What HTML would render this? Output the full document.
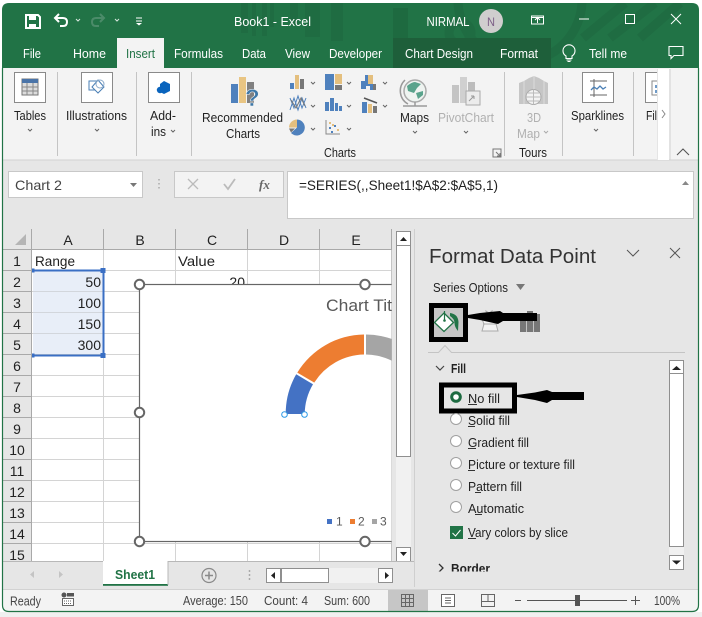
<!DOCTYPE html>
<html><head><meta charset="utf-8"><style>
html,body{margin:0;padding:0;background:#fff;width:702px;height:617px;overflow:hidden}
svg{display:block;font-family:"Liberation Sans",sans-serif}
text{fill:#222;font-size:13px}
.w text,text.w{fill:#fff}
.h text{font-size:14px;text-anchor:middle;fill:#222}
.d text{fill:#b0b0b0}
.g{stroke:#d4d4d4;stroke-width:1}
.hd{fill:#fff;stroke:#666;stroke-width:2}
.btn{fill:#fff;stroke:#8f8f8f;stroke-width:1}
.u{stroke:#333;stroke-width:1}
</style></head><body>
<svg width="702" height="617" viewBox="0 0 702 617" xmlns="http://www.w3.org/2000/svg">
<defs>
<clipPath id="win"><path d="M9 3H692Q699 3 699 10V605Q699 612 692 612H9Q2 612 2 605V10Q2 3 9 3Z"/></clipPath>
<clipPath id="cc"><rect x="0" y="250" width="392" height="311"/></clipPath>
<clipPath id="bd"><rect x="430" y="555" width="230" height="16.500"/></clipPath>
<clipPath id="c20"><rect x="175" y="271" width="75" height="13"/></clipPath>
</defs>
<rect width="702" height="617" fill="#fff"/>
<rect x="0" y="612" width="702" height="5" fill="#f0f0f0"/>
<g clip-path="url(#win)">
<rect x="2" y="3" width="697" height="609" fill="#217346"/>
<!-- title pattern -->
<g fill="#1f6c42">
<path d="M241 3h7v30h-7zM252 3h4v33h-4zM262 3h5v33h-5zM270 3h4v24h-4zM290 3h8v22h-8zM305 3h15v34h-15zM331 3h12v38h-12z"/>
</g>
<g fill="none" stroke="#1f6c42" stroke-width="9">
<circle cx="520" cy="0" r="62"/><circle cx="460" cy="33" r="11"/>
<path d="M625 3L583 38M655 3L610 38M680 3L640 38"/>
</g>
<rect x="393" y="38" width="158" height="30" fill="#1e5f3a"/>
<path d="M393 8h15v30h-15z" fill="#1e6a40"/>
<!-- ribbon -->
<rect x="2" y="68" width="697" height="92" fill="#f3f3f3"/>
<rect x="2" y="160" width="697" height="72" fill="#e6e6e6"/>
<rect x="2" y="159.500" width="697" height="1" fill="#d2d2d2"/>
<rect x="117" y="38" width="47" height="31" fill="#f3f3f3"/>
<!-- QAT -->
<path d="M26 15h12l2 2v11H26z" fill="none" stroke="#fff" stroke-width="2"/><rect x="29" y="15" width="7" height="5" fill="#fff"/><rect x="29" y="24" width="7" height="4" fill="#fff"/>
<path d="M59 14l-4 4 4 4M55 18h8q4 0 4 4t-4 4h-3" fill="none" stroke="#fff" stroke-width="2"/>
<path d="M76 19l2 2 2-2M115 19l2 2 2-2" fill="none" stroke="#d8e6de" stroke-width="1"/>
<path d="M100 14l4 4-4 4M104 18h-8q-4 0-4 4t4 4h3" fill="none" stroke="#4b8b69" stroke-width="2"/>
<path d="M136 18h6M136 21h6" stroke="#fff" stroke-width="1"/><path d="M136 23l3 2.500 3-2.500z" fill="#fff"/>
<!-- title -->
<g class="w">
<text x="234" y="26" textLength="77" lengthAdjust="spacingAndGlyphs">Book1  -  Excel</text>
<text x="426.500" y="26" textLength="43" lengthAdjust="spacingAndGlyphs">NIRMAL</text>
<text x="23" y="58" textLength="18" lengthAdjust="spacingAndGlyphs">File</text>
<text x="73" y="58" textLength="33" lengthAdjust="spacingAndGlyphs">Home</text>
<text x="174" y="58" textLength="49" lengthAdjust="spacingAndGlyphs">Formulas</text>
<text x="242" y="58" textLength="24" lengthAdjust="spacingAndGlyphs">Data</text>
<text x="285" y="58" textLength="25" lengthAdjust="spacingAndGlyphs">View</text>
<text x="329" y="58" textLength="53" lengthAdjust="spacingAndGlyphs">Developer</text>
<text x="405" y="58" textLength="68" lengthAdjust="spacingAndGlyphs">Chart Design</text>
<text x="500" y="58" textLength="38" lengthAdjust="spacingAndGlyphs">Format</text>
<text x="589" y="58" textLength="38" lengthAdjust="spacingAndGlyphs">Tell me</text>
</g>
<text x="126" y="58" textLength="29" lengthAdjust="spacingAndGlyphs" style="fill:#217346">Insert</text>
<circle cx="491" cy="21" r="12" fill="#d0cece"/>
<text x="487" y="26" textLength="8" lengthAdjust="spacingAndGlyphs" style="fill:#7d5f87;font-size:12px">N</text>
<!-- window ctrl -->
<path d="M531.500 16h12v8h-12zM537.500 23v-5M535 20l2.500-2.500 2.500 2.500M531.500 17.500h12" fill="none" stroke="#fff" stroke-width="1"/>
<path d="M579 19h10" stroke="#fff" stroke-width="1"/>
<rect x="625.500" y="14.500" width="9" height="9" fill="none" stroke="#fff" stroke-width="1"/>
<path d="M671 14l10 10M681 14l-10 10" stroke="#fff" stroke-width="1"/>
<path d="M566 56a6 6 0 1 1 6 0v2.500h-6zM566.500 60h5M567.500 61.500h3" fill="none" stroke="#fff" stroke-width="1.100"/>
<path d="M669 46.500h14v9h-9l-3 3v-3h-2z" fill="none" stroke="#fff" stroke-width="1.100"/>
<!-- ribbon groups sep -->
<g stroke="#c4c4c4" stroke-width="1">
<path d="M57.500 72v84M136.500 72v84M191.500 72v84M504.500 72v84M562.500 72v84M633.500 72v84"/>
</g>
<!-- large buttons -->
<g fill="#fff" stroke="#8a8a8a" stroke-width="1">
<rect x="14.500" y="72.500" width="31" height="30"/>
<rect x="81.500" y="72.500" width="31" height="30"/>
<rect x="148.500" y="72.500" width="31" height="30"/>
<rect x="582.500" y="72.500" width="31" height="30"/>
<rect x="645.500" y="72.500" width="20" height="30"/>
</g>
<rect x="22" y="79" width="16" height="16" fill="#dcdcdc" stroke="#777"/><rect x="22" y="79" width="16" height="4" fill="#4a74a8"/><path d="M22 87h16M22 91h16M27 83v12M33 83v12" stroke="#888"/>
<path d="M89 81h9v9h-9z" fill="none" stroke="#4a7fb5"/><path d="M98 80l6 7-6 6-6-6z" fill="#fff" stroke="#4a7fb5"/><circle cx="100" cy="84" r="4" fill="none" stroke="#8aa9c9"/>
<path d="M164 81l6 3v7l-6 3-4-2v-8z" fill="#0a64bd"/><circle cx="160" cy="90" r="3.200" fill="#0a64bd"/>
<path d="M590 81h17M590 95h17M594 79v18" stroke="#666" fill="none"/><path d="M591 90l3-3 3 2 3-3 3 3 3-2" fill="none" stroke="#4a7fb5" stroke-width="1.300"/>
<rect x="652" y="81" width="8" height="14" fill="none" stroke="#8a8a8a"/><rect x="655" y="85" width="5" height="3" fill="#6f9bc8"/><rect x="655" y="90" width="5" height="3" fill="#6f9bc8"/>
<!-- fil scroll -->
<rect x="657" y="69" width="12" height="91" fill="#fff"/><rect x="657" y="69" width="1" height="91" fill="#e5e5e5"/><rect x="669.500" y="69" width="1" height="91" fill="#d0d0d0"/>
<path d="M662 110l3 4-3 4" fill="none" stroke="#888"/>
<path d="M677 155l6-6 6 6" fill="none" stroke="#555" stroke-width="1.100"/>
<!-- ribbon labels -->
<text x="14" y="120" textLength="32" lengthAdjust="spacingAndGlyphs">Tables</text>
<text x="66" y="120" textLength="61" lengthAdjust="spacingAndGlyphs">Illustrations</text>
<text x="150" y="120" textLength="26" lengthAdjust="spacingAndGlyphs">Add-</text>
<text x="151" y="136" textLength="15" lengthAdjust="spacingAndGlyphs">ins</text>
<text x="202" y="122" textLength="81" lengthAdjust="spacingAndGlyphs">Recommended</text>
<text x="226" y="138" textLength="34" lengthAdjust="spacingAndGlyphs">Charts</text>
<text x="324" y="157" textLength="32" lengthAdjust="spacingAndGlyphs">Charts</text>
<text x="400" y="122" textLength="29" lengthAdjust="spacingAndGlyphs">Maps</text>
<text x="519" y="157" textLength="28" lengthAdjust="spacingAndGlyphs">Tours</text>
<text x="571" y="120" textLength="53" lengthAdjust="spacingAndGlyphs">Sparklines</text>
<text x="646" y="120" textLength="11" lengthAdjust="spacingAndGlyphs">Fil</text>
<g class="d">
<text x="438" y="122" textLength="56" lengthAdjust="spacingAndGlyphs">PivotChart</text>
<text x="527" y="122" textLength="14" lengthAdjust="spacingAndGlyphs">3D</text>
<text x="517" y="138" textLength="23" lengthAdjust="spacingAndGlyphs">Map</text>
</g>
<path d="M28 129l2 2 2-2M95 129l2 2 2-2M171 130l2 2 2-2M413 131l2 2 2-2M594 129l2 2 2-2M464 131l2 2 2-2" fill="none" stroke="#666"/>
<path d="M544 131l2 2 2-2" fill="none" stroke="#aaa"/>
<!-- rec charts icon -->
<rect x="231" y="84" width="7" height="19" fill="#4f81bd"/><rect x="239" y="77" width="7" height="26" fill="#e9c583"/><rect x="247" y="82" width="7" height="21" fill="#808080"/>
<text x="245" y="106" style="font-size:24px;font-weight:bold;fill:#3e78a8;stroke:#f3f3f3;stroke-width:.5">?</text>
<!-- chart icons -->
<g>
<rect x="290" y="83" width="4" height="6" fill="#4f81bd"/><rect x="295" y="75" width="4" height="14" fill="#e4bf7e"/><rect x="300" y="79" width="4" height="10" fill="#777"/>
<rect x="325" y="74" width="9" height="16" fill="#4f81bd"/><rect x="335" y="74" width="7" height="10" fill="#e4bf7e"/><rect x="335" y="85" width="7" height="5" fill="#777"/>
<path d="M361 89v-8h4v-6h4v9h4v6h-3v-4h-4v3z" fill="#4f81bd"/><rect x="368" y="75" width="5" height="9" fill="#e4bf7e"/><rect x="373" y="84" width="3" height="6" fill="#777"/>
<path d="M290 98l4 10 4-12 4 12 4-10M290 110l4-12 4 12 4-12 4 10" fill="none" stroke="#4f81bd"/><path d="M291 100l5 8 5-10 4 8" fill="none" stroke="#777"/>
<rect x="325" y="102" width="4" height="9" fill="#4f81bd"/><rect x="330" y="98" width="4" height="13" fill="#4f81bd"/><rect x="335" y="103" width="3" height="8" fill="#4f81bd"/><rect x="339" y="106" width="3" height="5" fill="#4f81bd"/>
<rect x="362" y="102" width="5" height="11" fill="#4f81bd"/><rect x="368" y="104" width="4" height="9" fill="#e4bf7e"/><rect x="373" y="106" width="4" height="7" fill="#777"/><path d="M364 98l13 5" stroke="#555" stroke-width="1.500"/>
<path d="M297 119.500a8 8 0 1 1-6 13.500l6-5.500z" fill="#4f81bd"/><path d="M297 119.500a8 8 0 0 0-8 8h8z" fill="#e4bf7e"/><path d="M289 128.500h6l-4 4z" fill="#777"/>
<path d="M326 120v14h14" fill="none" stroke="#888"/><g fill="#4f81bd"><rect x="329" y="127" width="2" height="2"/><rect x="334" y="125" width="2" height="2"/><rect x="331" y="131" width="2" height="2"/></g><g fill="#e4bf7e"><rect x="332" y="124" width="2" height="2"/><rect x="337" y="129" width="2" height="2"/><rect x="329" y="122" width="2" height="2"/></g>
<path d="M311 82l2 2 2-2M347 82l2 2 2-2M383 82l2 2 2-2M311 105l2 2 2-2M347 105l2 2 2-2M383 105l2 2 2-2M311 128l2 2 2-2M347 128l2 2 2-2" fill="none" stroke="#666"/>
</g>
<!-- globe -->
<circle cx="415" cy="91" r="11" fill="#eef3f0" stroke="#aaa" stroke-width="1.500"/><path d="M407 86q5-4 8-4l6 2-4 4-3 5-6-2zM416 93l7-2 0 4-5 4z" fill="#5aa38c"/><path d="M405 80a15 15 0 0 0 3 24M403 106h24M415 102v4" fill="none" stroke="#999" stroke-width="1.500"/>
<!-- pivot -->
<rect x="452" y="85" width="7" height="18" fill="#c4c4c4"/><rect x="460" y="77" width="7" height="26" fill="#d0d0d0"/><rect x="468" y="82" width="7" height="21" fill="#bcbcbc"/><rect x="466" y="91" width="14" height="14" fill="#ececec" stroke="#aaa"/><path d="M469 101l5-5M474 96h-3M474 96v3" stroke="#999" fill="none"/>
<!-- 3d map -->
<path d="M519 83l5-2v23h-5zM524 81l5-3v26h-5zM529 78l5-2v28h-5zM534 76l5 2v26h-5zM539 78l5 3v23h-5zM544 81l4 2v21h-4z" fill="#c6c6c6"/><path d="M524 81v23M534 76v28M544 81v23" stroke="#dcdcdc"/><circle cx="533.500" cy="97" r="7.500" fill="#f3f3f3" stroke="#aaa"/><path d="M526 97h15M533.500 89.500v15M528 93h11M528 101h11" stroke="#bbb"/>
<!-- dialog launcher -->
<path d="M493 149h8v8h-8z M496 152l4 4M500 153v3h-3" fill="none" stroke="#777"/>
<!-- name box -->
<rect x="8.500" y="171.500" width="134" height="26" fill="#fff" stroke="#c8c8c8"/>
<text x="15" y="190" textLength="47" lengthAdjust="spacingAndGlyphs" style="fill:#444;font-size:14px">Chart 2</text>
<path d="M130 183h7l-3.500 4z" fill="#777"/>
<path d="M159 179v1.500M159 183v1.500M159 187v1.500" stroke="#aaa" stroke-width="1.500"/>
<rect x="174.500" y="171.500" width="109" height="26" fill="#f3f3f3" stroke="#c8c8c8"/>
<path d="M188 179l10 10M198 179l-10 10" stroke="#bbb" stroke-width="1.300"/>
<path d="M224 184l4 5 7-10" fill="none" stroke="#bbb" stroke-width="1.800"/>
<text x="259" y="189" style="font-family:'Liberation Serif',serif;font-style:italic;font-weight:bold;font-size:13px;fill:#666">fx</text>
<rect x="287.500" y="171.500" width="406" height="47" fill="#fff" stroke="#c8c8c8"/>
<text x="299" y="190" textLength="199" lengthAdjust="spacingAndGlyphs" style="font-size:14px">=SERIES(,,Sheet1!$A$2:$A$5,1)</text>
<path d="M682 185l3.500-4 3.500 4z" fill="#888"/>
<!-- grid -->
<rect x="3" y="229" width="389" height="332" fill="#fff"/>
<rect x="3" y="229" width="389" height="20.500" fill="#e6e6e6"/>
<rect x="3" y="229" width="28.500" height="332" fill="#e6e6e6"/>
<path d="M15 245l11-11v11z" fill="#b5b5b5"/>
<g class="g">
<path d="M32 270.500H392M32 291.500H392M32 312.500H392M32 333.500H392M32 354.500H392M32 375.500H392M32 396.500H392M32 417.500H392M32 438.500H392M32 459.500H392M32 480.500H392M32 501.500H392M32 522.500H392M32 543.500H392"/>
<path d="M103.500 250V561M175.500 250V561M247.500 250V561M319.500 250V561M391.500 250V561"/>
</g>
<g stroke="#a9a9a9" stroke-width="1">
<path d="M3 249.500H392M31.500 229V561"/>
<path d="M103.500 229v20M175.500 229v20M247.500 229v20M319.500 229v20M391.500 229v20"/>
<path d="M3 270.500h28M3 291.500h28M3 312.500h28M3 333.500h28M3 354.500h28M3 375.500h28M3 396.500h28M3 417.500h28M3 438.500h28M3 459.500h28M3 480.500h28M3 501.500h28M3 522.500h28M3 543.500h28"/>
</g>
<g class="h">
<text x="68" y="245">A</text><text x="140" y="245">B</text><text x="212" y="245">C</text><text x="284" y="245">D</text><text x="356" y="245">E</text>
<text x="17" y="266">1</text><text x="17" y="287">2</text><text x="17" y="308">3</text><text x="17" y="329">4</text><text x="17" y="350">5</text><text x="17" y="371">6</text><text x="17" y="392">7</text><text x="17" y="413">8</text><text x="17" y="434">9</text><text x="17" y="455">10</text><text x="17" y="476">11</text><text x="17" y="497">12</text><text x="17" y="518">13</text><text x="17" y="539">14</text><text x="17" y="560">15</text>
</g>
<!-- cells -->
<rect x="33" y="271" width="70" height="83" fill="#e8eef8"/>
<path d="M33 291.500h70M33 312.500h70M33 333.500h70" stroke="#d2d6dc"/>
<path d="M33 270.500H103.500V355.500H33" fill="none" stroke="#3a6fc4" stroke-width="2"/>
<rect x="32" y="268.500" width="2.500" height="4" fill="#3a6fc4"/><rect x="100.500" y="268" width="5" height="5" fill="#3a6fc4"/><rect x="32" y="353.500" width="2.500" height="4" fill="#3a6fc4"/><rect x="100.500" y="353" width="5" height="5" fill="#3a6fc4"/>
<g>
<text x="35" y="266" style="font-size:14px" textLength="40" lengthAdjust="spacingAndGlyphs">Range</text>
<text x="178" y="266" style="font-size:14px" textLength="37" lengthAdjust="spacingAndGlyphs">Value</text>
<text x="101" y="287" text-anchor="end" style="font-size:14px">50</text>
<text x="101" y="308" text-anchor="end" style="font-size:14px">100</text>
<text x="101" y="329" text-anchor="end" style="font-size:14px">150</text>
<text x="101" y="350" text-anchor="end" style="font-size:14px">300</text>
<text x="245" y="287" text-anchor="end" style="font-size:14px" clip-path="url(#c20)">20</text>
</g>
<!-- chart -->
<g clip-path="url(#cc)">
<rect x="139.500" y="284.500" width="400" height="257" fill="#fff" stroke="#666" stroke-width="1.200"/>
<path d="M285.700 414A79.500 79.500 0 0 1 296.200 374.300L313 384.300A60 60 0 0 0 304.700 414Z" fill="#4472c4"/>
<path d="M297.300 372.600A79.500 79.500 0 0 1 364 334.500V354.500A60 60 0 0 0 314.300 382.600Z" fill="#ed7d31"/>
<path d="M366 334.500A79.500 79.500 0 0 1 445 414H425A60 60 0 0 0 366 354.500Z" fill="#a5a5a5"/>
</g>
<rect x="391.500" y="250" width="1" height="311" fill="#b5b5b5"/>
<text x="326" y="311" textLength="66" lengthAdjust="spacingAndGlyphs" style="font-size:17px;fill:#595959">Chart Tit</text>
<rect x="327" y="519" width="5" height="5" fill="#4472c4"/><text x="336" y="525.500" style="font-size:12px;fill:#595959">1</text>
<rect x="350" y="519" width="5" height="5" fill="#ed7d31"/><text x="358" y="525.500" style="font-size:12px;fill:#595959">2</text>
<rect x="372" y="519" width="5" height="5" fill="#a5a5a5"/><text x="380" y="525.500" style="font-size:12px;fill:#595959">3</text>
<circle cx="284.500" cy="414.500" r="2.800" fill="#fff" stroke="#2e9ae6" stroke-width="1"/>
<circle cx="304.500" cy="414.500" r="2.800" fill="#fff" stroke="#2e9ae6" stroke-width="1"/>
<g class="hd"><circle cx="139.500" cy="284.500" r="4.700"/><circle cx="365" cy="284.500" r="4.700"/><circle cx="139.500" cy="412.500" r="4.700"/><circle cx="139.500" cy="541.500" r="4.700"/><circle cx="365" cy="541.500" r="4.700"/></g>
<!-- vscroll -->
<rect x="392" y="229" width="22" height="332" fill="#e6e6e6"/>
<rect x="396" y="231" width="15" height="330" fill="#f1f1f1"/>
<rect x="396.500" y="245.500" width="14" height="211" fill="#fff" stroke="#8f8f8f"/>
<rect class="btn" x="396.500" y="231.500" width="14" height="14"/><path d="M400 241l3.500-4 3.500 4z" fill="#222"/>
<rect class="btn" x="396.500" y="547.500" width="14" height="14"/><path d="M400 552l3.500 4 3.500-4z" fill="#222"/>
<!-- pane -->
<rect x="414" y="229" width="285" height="361" fill="#e6e6e6"/>
<rect x="414" y="229" width="1" height="358" fill="#cfcfcf"/>
<text x="429" y="263" textLength="167" lengthAdjust="spacingAndGlyphs" style="font-size:20px;fill:#333">Format Data Point</text>
<path d="M627 250l6 6 6-6M670 248l10 10M680 248l-10 10" fill="none" stroke="#555" stroke-width="1"/>
<text x="433" y="292" textLength="75" lengthAdjust="spacingAndGlyphs" style="font-size:12.500px">Series Options</text>
<path d="M516 284h9l-4.500 6z" fill="#777"/>
<!-- pane tabs -->
<path d="M486 311l3 2 3-2-1 4h-4zM482 319h16l-2 5 2 7h-16l2-7zM483 324h14" fill="#f3f3f3" stroke="#aaa"/>
<rect x="520" y="314" width="6.300" height="18" fill="#777"/><rect x="527" y="311" width="6" height="21" fill="#777"/><rect x="533.700" y="314" width="6.300" height="18" fill="#777"/>
<rect x="431.500" y="305.500" width="34" height="34" fill="#c6c6c6" stroke="#000" stroke-width="5"/>
<path d="M450 313q8 1 8.500 9l-.5 9q-3.500-4-3.500-8 0-4-4.500-7z" fill="#217346"/>
<path d="M444 313l9.500 9.500-9.500 9-9.500-9z" fill="#fff" stroke="#217346" stroke-width="1.300"/>
<path d="M444.500 311v9" stroke="#217346" stroke-width="1.200"/><circle cx="444.500" cy="320.500" r="1.300" fill="#217346"/>
<path d="M468 315L480 313L500 311L503 313H537V321H503L498 324L480 320L468 318Z" fill="#000"/>
<path d="M428 352.500h10.500l6.500-7 6.500 7H685" fill="none" stroke="#c4c4c4"/>
<path d="M436 366l4 4 4-4" fill="none" stroke="#444" stroke-width="1.200"/>
<text x="451" y="373" textLength="15" lengthAdjust="spacingAndGlyphs" style="font-weight:bold;font-size:12.500px">Fill</text>
<!-- pane scroll -->
<rect x="669" y="360" width="15" height="210" fill="#f1f1f1"/>
<rect x="669.500" y="373.500" width="14" height="173" fill="#fff" stroke="#8f8f8f"/>
<rect class="btn" x="669.500" y="360.500" width="14" height="13"/><path d="M672 370l4.500-4 4.500 4z" fill="#222"/>
<rect class="btn" x="669.500" y="555.500" width="14" height="14"/><path d="M672 560.500l4.500 4 4.500-4z" fill="#222"/>
<!-- fill options -->
<rect x="441.500" y="385" width="73" height="26" fill="#e6e6e6" stroke="#000" stroke-width="5"/>
<path d="M517 395L535 392.500L547 390L552 392H584V400H552L547 403L535 400L517 397Z" fill="#000"/>
<circle cx="456" cy="397" r="4.300" fill="#fff" stroke="#1d6b41" stroke-width="3"/>
<g fill="#fff" stroke="#a0a0a0" stroke-width="1">
<circle cx="456" cy="419" r="5.500"/><circle cx="456" cy="441" r="5.500"/><circle cx="456" cy="463" r="5.500"/><circle cx="456" cy="485" r="5.500"/><circle cx="456" cy="507" r="5.500"/>
</g>
<g>
<text x="468" y="403" textLength="32" lengthAdjust="spacingAndGlyphs" style="font-size:12.500px">No fill</text>
<text x="468" y="425" textLength="42" lengthAdjust="spacingAndGlyphs" style="font-size:12.500px">Solid fill</text>
<text x="468" y="447" textLength="61" lengthAdjust="spacingAndGlyphs" style="font-size:12.500px">Gradient fill</text>
<text x="468" y="469" textLength="107" lengthAdjust="spacingAndGlyphs" style="font-size:12.500px">Picture or texture fill</text>
<text x="468" y="491" textLength="54" lengthAdjust="spacingAndGlyphs" style="font-size:12.500px">Pattern fill</text>
<text x="468" y="513" textLength="56" lengthAdjust="spacingAndGlyphs" style="font-size:12.500px">Automatic</text>
<text x="468" y="537" textLength="100" lengthAdjust="spacingAndGlyphs" style="font-size:12.500px">Vary colors by slice</text>
</g>
<g class="u"><path d="M468 404.500h9M468 426.500h7M468 448.500h8M468 470.500h7M475 492.500h6M475 514.500h7M468 538.500h8"/></g>
<rect x="450" y="526" width="13" height="13" fill="#217346"/>
<path d="M452.500 533l3 3 5-6" fill="none" stroke="#fff" stroke-width="1"/>
<path d="M439 564l4 4-4 4" fill="none" stroke="#333" stroke-width="1.300" clip-path="url(#bd)"/>
<text x="451" y="573" textLength="39" lengthAdjust="spacingAndGlyphs" style="font-weight:bold;font-size:12.500px" clip-path="url(#bd)">Border</text>
<!-- tabs -->
<rect x="2" y="561" width="412" height="29" fill="#e6e6e6"/>
<rect x="3" y="561" width="411" height="1" fill="#b8b8b8"/>
<rect x="103" y="561" width="65" height="23" fill="#fff"/>
<rect x="103" y="584" width="65" height="1.800" fill="#217346"/>
<rect x="167.500" y="561" width="1" height="24" fill="#b8b8b8"/>
<text x="115" y="579" textLength="40" lengthAdjust="spacingAndGlyphs" style="font-weight:bold;fill:#217346">Sheet1</text>
<path d="M34 571v7l-4-3.500zM59 571v7l4-3.500z" fill="#c4c4c4"/>
<circle cx="209" cy="575.500" r="7" fill="none" stroke="#8a8a8a" stroke-width="1.200"/><path d="M205 575.500h8M209 571.500v8" stroke="#8a8a8a" stroke-width="1.500"/>
<path d="M249.500 570v2M249.500 574v2M249.500 578v2" stroke="#aaa" stroke-width="1.500"/>
<rect x="266.500" y="568.500" width="14" height="14" fill="#fff" stroke="#8f8f8f"/><path d="M275 572v7l-4-3.500z" fill="#222"/>
<rect x="281" y="568" width="97" height="15" fill="#f1f1f1"/>
<rect x="281.500" y="568.500" width="47" height="14" fill="#fff" stroke="#8f8f8f"/>
<rect x="378.500" y="568.500" width="14" height="14" fill="#fff" stroke="#8f8f8f"/><path d="M385 572v7l4-3.500z" fill="#222"/>
<!-- status bar -->
<rect x="2" y="590" width="697" height="22" fill="#f3f3f3"/>
<rect x="2" y="589" width="697" height="1" fill="#d2d2d2"/>
<text x="10" y="605.500" textLength="31" lengthAdjust="spacingAndGlyphs" style="font-size:12.500px;fill:#444">Ready</text>
<circle cx="64" cy="595" r="2.500" fill="#555"/><rect x="67" y="593" width="7" height="3.500" fill="#555"/><rect x="62.500" y="598.500" width="11" height="7" fill="#fff" stroke="#666"/><path d="M64 601h8M64 603.500h8" stroke="#666" stroke-dasharray="1 1"/>
<g>
<text x="183" y="605" textLength="65" lengthAdjust="spacingAndGlyphs" style="font-size:12.500px;fill:#444">Average: 150</text>
<text x="264" y="605" textLength="44" lengthAdjust="spacingAndGlyphs" style="font-size:12.500px;fill:#444">Count: 4</text>
<text x="324" y="605" textLength="46" lengthAdjust="spacingAndGlyphs" style="font-size:12.500px;fill:#444">Sum: 600</text>
<text x="654" y="605" textLength="26" lengthAdjust="spacingAndGlyphs" style="font-size:12.500px;fill:#444">100%</text>
</g>
<rect x="388" y="590" width="40" height="22" fill="#c6c6c6"/>
<path d="M401.500 594.500h12v12h-12zM401.500 598.500h12M401.500 602.500h12M405.500 594.500v12M409.500 594.500v12" fill="none" stroke="#666"/>
<rect x="441.500" y="594.500" width="13" height="12" fill="#fff" stroke="#666"/><path d="M445 598h6M445 600.500h6M445 603h6" stroke="#666"/>
<path d="M481.500 594.500h13v12h-13zM481.500 601.500h13M488 594.500v7" fill="none" stroke="#666"/>
<path d="M515 600.500h6M527 600.500h100M631 600.500h9M635.500 596v9" stroke="#555" stroke-width="1"/>
<rect x="575" y="595" width="5" height="11" fill="#555"/>
</g>
<!-- window border -->
<path d="M2.500 68V605Q2.500 611.500 9 611.500H692Q698.500 611.500 698.500 605V68" fill="none" stroke="#217346" stroke-width="1.200"/>
</svg>
</body></html>
